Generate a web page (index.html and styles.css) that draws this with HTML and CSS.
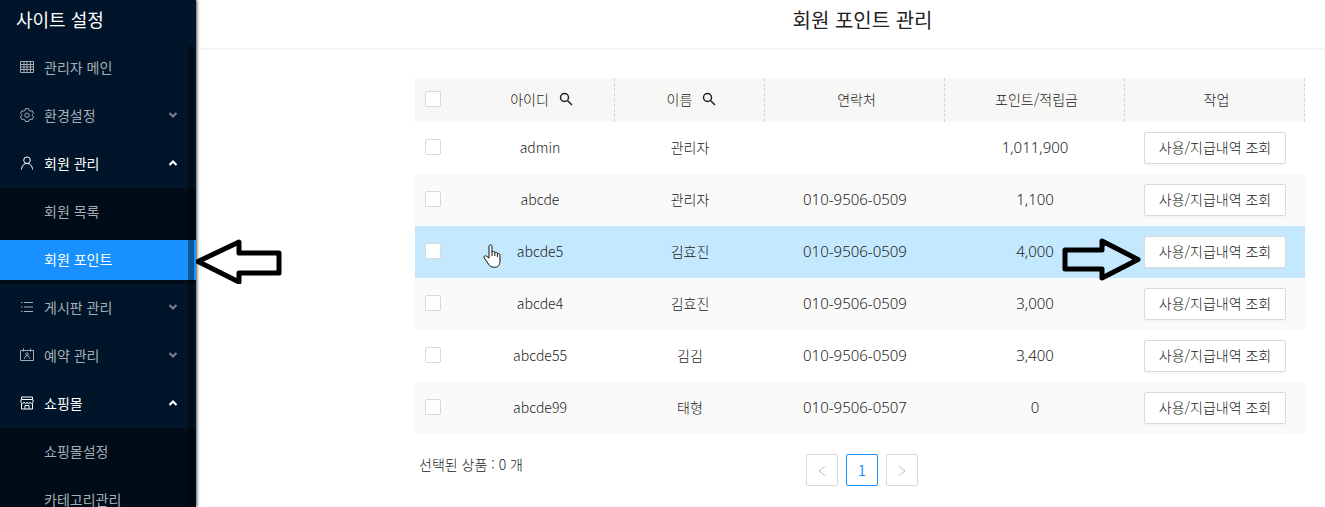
FILE: index.html
```html
<!DOCTYPE html>
<html lang="ko">
<head>
    <meta charset="UTF-8">
    <meta name="viewport" content="width=device-width, initial-scale=1.0">
    <title>회원 포인트 관리</title>
    <link rel="stylesheet" href="styles.css">
</head>
<body>
    <div class="layout">
        <aside class="sidebar">
            <h2 class="site-title">사이트 설정</h2>
            <nav class="menu">
                <a class="menu-item" href="#">
                    <svg class="icon" viewBox="0 0 14 14"><path d="M.5 1.500h13v11H.5zM.5 4.500h13M.5 7h13M.5 9.500h13M4 1.500v11M7 1.500v11M10.500 1.500v11"/></svg>
                    <span>관리자 메인</span>
                </a>
                <button class="menu-item" type="button">
                    <svg class="icon" viewBox="0 0 14 14"><path d="M5.400.7h3.200l.5 1.800 1.200.7 1.800-.5 1.400 2.700-1.200 1.300v1l1.200 1.300-1.400 2.600-1.900-.4-1.100.7-.5 1.600H5.400l-.5-1.600-1.200-.7-1.800.4L.5 9l1.200-1.300v-1L.5 5.400l1.400-2.700 1.800.5 1.200-.7z"/><circle cx="7" cy="7.200" r="2.200"/></svg>
                    <span>환경설정</span>
                    <svg class="arrow" viewBox="0 0 10 8"><path d="M1.500 2 5 5.500 8.500 2"/></svg>
                </button>
                <button class="menu-item open" type="button">
                    <svg class="icon" viewBox="0 0 14 14"><circle cx="7" cy="4.200" r="3.300"/><path d="M1.500 13.500c.2-3.600 2.300-6 5.500-6s5.300 2.400 5.500 6"/></svg>
                    <span>회원 관리</span>
                    <svg class="arrow" viewBox="0 0 10 8"><path d="M1.500 6 5 2.500 8.500 6"/></svg>
                </button>
                <div class="submenu">
                    <a class="menu-item" href="#">회원 목록</a>
                    <a class="menu-item active" href="#">회원 포인트</a>
                </div>
                <button class="menu-item" type="button">
                    <svg class="icon" viewBox="0 0 14 14"><path d="M4 2.500h9M4 7h9M4 11.500h9M1 2.500h1.500M1 7h1.500M1 11.500h1.500"/></svg>
                    <span>게시판 관리</span>
                    <svg class="arrow" viewBox="0 0 10 8"><path d="M1.500 2 5 5.500 8.500 2"/></svg>
                </button>
                <button class="menu-item" type="button">
                    <svg class="icon" viewBox="0 0 14 14"><path d="M.5 2.500h13v10H.5zM3.500.5v3M10.500.5v3M5 2.500h4"/><circle cx="7" cy="6.200" r="1.300"/><path d="M4.500 10.800c.2-1.900 1-3 2.500-3s2.300 1.100 2.500 3"/></svg>
                    <span>예약 관리</span>
                    <svg class="arrow" viewBox="0 0 10 8"><path d="M1.500 2 5 5.500 8.500 2"/></svg>
                </button>
                <button class="menu-item open" type="button">
                    <svg class="icon" viewBox="0 0 14 14"><path d="M1.500 1h11v2.500h-11zM1 3.500V6c0 2 3 2 3 0 0 2 3 2 3 0 0 2 3 2 3 0 0 2 3 2 3 0V3.500M1.500 7.500V13h11V7.500M5 13V9.500h4V13"/></svg>
                    <span>쇼핑몰</span>
                    <svg class="arrow" viewBox="0 0 10 8"><path d="M1.500 6 5 2.500 8.500 6"/></svg>
                </button>
                <div class="submenu">
                    <a class="menu-item" href="#">쇼핑몰설정</a>
                    <a class="menu-item" href="#">카테고리관리</a>
                </div>
            </nav>
            <div class="scrollbar"></div>
        </aside>

        <svg class="guide guide-left" viewBox="0 0 86 46"><path d="M2 23.500 43 4v11h40v20H43v9z"/></svg>

        <main class="main">
            <header class="header">
                <h1>회원 포인트 관리</h1>
            </header>
            <section class="content">
                <table class="members">
                    <colgroup>
                        <col class="col-check">
                        <col class="col-short">
                        <col class="col-short">
                        <col class="col-long">
                        <col class="col-long">
                        <col class="col-long">
                    </colgroup>
                    <thead>
                        <tr>
                            <th><input type="checkbox" aria-label="전체 선택"></th>
                            <th>
                                <div class="search-head">아이디
                                    <button type="button" aria-label="아이디 검색"><svg viewBox="0 0 14 14"><circle cx="5.500" cy="5.500" r="4"/><path d="m8.500 8.500 4.500 4.500"/></svg></button>
                                </div>
                            </th>
                            <th>
                                <div class="search-head">이름
                                    <button type="button" aria-label="이름 검색"><svg viewBox="0 0 14 14"><circle cx="5.500" cy="5.500" r="4"/><path d="m8.500 8.500 4.500 4.500"/></svg></button>
                                </div>
                            </th>
                            <th>연락처</th>
                            <th>포인트/적립금</th>
                            <th>작업</th>
                        </tr>
                    </thead>
                    <tbody>
                        <tr>
                            <td><input type="checkbox" aria-label="admin 선택"></td>
                            <td>admin</td>
                            <td>관리자</td>
                            <td class="num"></td>
                            <td class="num">1,011,900</td>
                            <td><button class="btn" type="button">사용/지급내역 조회</button></td>
                        </tr>
                        <tr>
                            <td><input type="checkbox" aria-label="abcde 선택"></td>
                            <td>abcde</td>
                            <td>관리자</td>
                            <td class="num">010-9506-0509</td>
                            <td class="num">1,100</td>
                            <td><button class="btn" type="button">사용/지급내역 조회</button></td>
                        </tr>
                        <tr class="hover">
                            <td><input type="checkbox" aria-label="abcde5 선택"></td>
                            <td>
                                <svg class="pointer" viewBox="0 0 18 24"><path d="M6 14V2.500c0-2.200 3-2.200 3 0V8c.6-1 2.600-.8 2.800.6.8-.7 2.500-.3 2.600 1 .9-.5 2.600 0 2.600 1.600V17c0 4-2 6.300-5.500 6.300-3.700 0-5.300-1.600-6.700-4.300L1.200 13.800c-.8-1.600 1-2.800 2.300-1.500z"/><path d="M9 8v4M11.800 8.600V12M14.400 9.600V13"/></svg>
                                abcde5
                            </td>
                            <td>김효진</td>
                            <td class="num">010-9506-0509</td>
                            <td class="num">4,000</td>
                            <td>
                                <svg class="guide guide-right" viewBox="0 0 80 44"><path d="M77 21.500 41 3v9H4v19h37v9z"/></svg>
                                <button class="btn" type="button">사용/지급내역 조회</button>
                            </td>
                        </tr>
                        <tr>
                            <td><input type="checkbox" aria-label="abcde4 선택"></td>
                            <td>abcde4</td>
                            <td>김효진</td>
                            <td class="num">010-9506-0509</td>
                            <td class="num">3,000</td>
                            <td><button class="btn" type="button">사용/지급내역 조회</button></td>
                        </tr>
                        <tr>
                            <td><input type="checkbox" aria-label="abcde55 선택"></td>
                            <td>abcde55</td>
                            <td>김김</td>
                            <td class="num">010-9506-0509</td>
                            <td class="num">3,400</td>
                            <td><button class="btn" type="button">사용/지급내역 조회</button></td>
                        </tr>
                        <tr>
                            <td><input type="checkbox" aria-label="abcde99 선택"></td>
                            <td>abcde99</td>
                            <td>태형</td>
                            <td class="num">010-9506-0507</td>
                            <td class="num">0</td>
                            <td><button class="btn" type="button">사용/지급내역 조회</button></td>
                        </tr>
                    </tbody>
                </table>
                <div class="table-footer">
                    <span class="selected-count">선택된 상품 : 0 개</span>
                    <div class="pagination">
                        <button type="button" aria-label="이전" disabled><svg viewBox="0 0 12 12"><path d="M9 2.500 3 7l6 4.500"/></svg></button>
                        <button class="current" type="button">1</button>
                        <button type="button" aria-label="다음" disabled><svg viewBox="0 0 12 12"><path d="m3 2.500 6 4.500-6 4.500"/></svg></button>
                    </div>
                </div>
            </section>
        </main>
    </div>
</body>
</html>
```
FILE: styles.css
```css
* {
    box-sizing: border-box;
}
body {
    margin: 0;
    font-family: 'Noto Sans CJK KR', sans-serif;
    font-size: 14px;
    line-height: 20px;
    color: #222;
    background: #fff;
}
button {
    font: inherit;
    color: inherit;
    cursor: pointer;
}
svg {
    fill: none;
    stroke: currentColor;
}
.layout {
    position: relative;
    display: flex;
    height: 100vh;
    overflow: hidden;
}

/* Sidebar */
.sidebar {
    position: relative;
    z-index: 1;
    flex: 0 0 196px;
    overflow: hidden;
    background: #001529;
    box-shadow: 1px 0 3px rgba(0, 0, 0, 0.7);
}
.site-title {
    margin: 0;
    padding: 0 16px;
    font-size: 18px;
    font-weight: 400;
    line-height: 38px;
    height: 44px;
    color: #fff;
}
.menu,
.submenu {
    display: flex;
    flex-direction: column;
}
.menu-item {
    display: flex;
    flex: none;
    align-items: center;
    gap: 10px;
    width: 100%;
    height: 40px;
    margin: 4px 0;
    padding: 0 18px 2px 20px;
    border: 0;
    background: none;
    color: #a6adb4;
    text-decoration: none;
    text-align: left;
}
.menu-item.open,
.menu-item.active {
    color: #fff;
}
.menu-item.active {
    background: #1890ff;
}
.icon {
    width: 14px;
    height: 14px;
}
.arrow {
    width: 10px;
    height: 8px;
    margin-left: auto;
    stroke-width: 2;
}
.menu-item:not(.open) .arrow {
    color: #7d7f95;
}
.submenu {
    background: #000c17;
}
.submenu .menu-item {
    padding-left: 44px;
}
.scrollbar {
    position: absolute;
    top: 46px;
    right: 2px;
    bottom: 0;
    width: 6px;
    border-radius: 3px;
    background: rgba(0, 0, 0, 0.4);
}

/* Main */
.main {
    flex: 1;
    min-width: 0;
    padding-left: 4px;
}
.header {
    padding-left: 200px;
    border-bottom: 2px solid #f5f5f5;
    text-align: center;
}
.header h1 {
    margin: 0;
    font-size: 20px;
    font-weight: 400;
    line-height: 40px;
    padding-bottom: 8px;
}
.content {
    padding: 28px 20px 0 215px;
    font-weight: 300;
}
.members {
    width: 100%;
    table-layout: fixed;
    border-collapse: separate;
    border-spacing: 0;
    text-align: center;
}
.col-check {
    width: 50px;
}
.col-short {
    width: 150px;
}
.col-long {
    width: 180px;
}
.members th {
    height: 44px;
    padding: 0 0 3px 4px;
    font-weight: 300;
    background: #f7f7f5;
    border-right: 1px dashed #d5d5d5;
}
.members th:first-child {
    border-right: 0;
}
.members td {
    position: relative;
    height: 52px;
    padding: 0 0 2px;
}
.members td:last-child {
    padding: 0;
}
.members th:first-child,
.members td:first-child {
    padding-left: 10px;
    text-align: left;
}
.members .num {
    font-family: 'Noto Sans', 'Noto Sans CJK KR', sans-serif;
    font-size: 15px;
}
.members tbody tr:nth-child(even) {
    background: #fafafa;
}
.members tbody tr.hover {
    background: #c4e8fd;
}
.members input {
    appearance: none;
    display: block;
    width: 16px;
    height: 16px;
    margin: 0;
    border: 1px solid #d9d9d9;
    border-radius: 2px;
    background: #fff;
}
.search-head {
    display: flex;
    align-items: center;
    justify-content: center;
    gap: 10px;
}
.search-head button {
    display: flex;
    padding: 0;
    border: 0;
    background: none;
}
.search-head svg {
    width: 14px;
    height: 14px;
    stroke-width: 1.5;
}
.btn {
    height: 32px;
    padding: 0 14px 2px;
    border: 1px solid #d9d9d9;
    border-radius: 2px;
    background: #fff;
    box-shadow: 0 2px 0 rgba(0, 0, 0, 0.02);
    white-space: nowrap;
}
.table-footer {
    display: grid;
    grid-template-columns: 1fr auto 1fr;
    padding: 20px 0 0 4px;
}
.pagination {
    display: flex;
    gap: 8px;
}
.pagination button {
    display: flex;
    align-items: center;
    justify-content: center;
    width: 32px;
    height: 32px;
    padding: 0;
    border: 1px solid #d9d9d9;
    border-radius: 2px;
    background: #fff;
    color: #bfbfbf;
}
.pagination svg {
    width: 12px;
    height: 12px;
}
.pagination .current {
    border-color: #1890ff;
    color: #1890ff;
    font-weight: 400;
}

/* Guide arrows and pointer drawn over the page */
.guide {
    position: absolute;
    z-index: 2;
    fill: #fff;
    stroke: #000;
    stroke-width: 5;
    stroke-linejoin: round;
}
.guide-left {
    top: 238px;
    left: 196px;
    width: 86px;
    height: 46px;
}
.guide-right {
    top: 12px;
    left: -64px;
    width: 80px;
    height: 44px;
    fill: none;
}
.pointer {
    position: absolute;
    top: 18px;
    left: 18px;
    width: 18px;
    height: 24px;
    fill: #fff;
    stroke: #111;
}
```
